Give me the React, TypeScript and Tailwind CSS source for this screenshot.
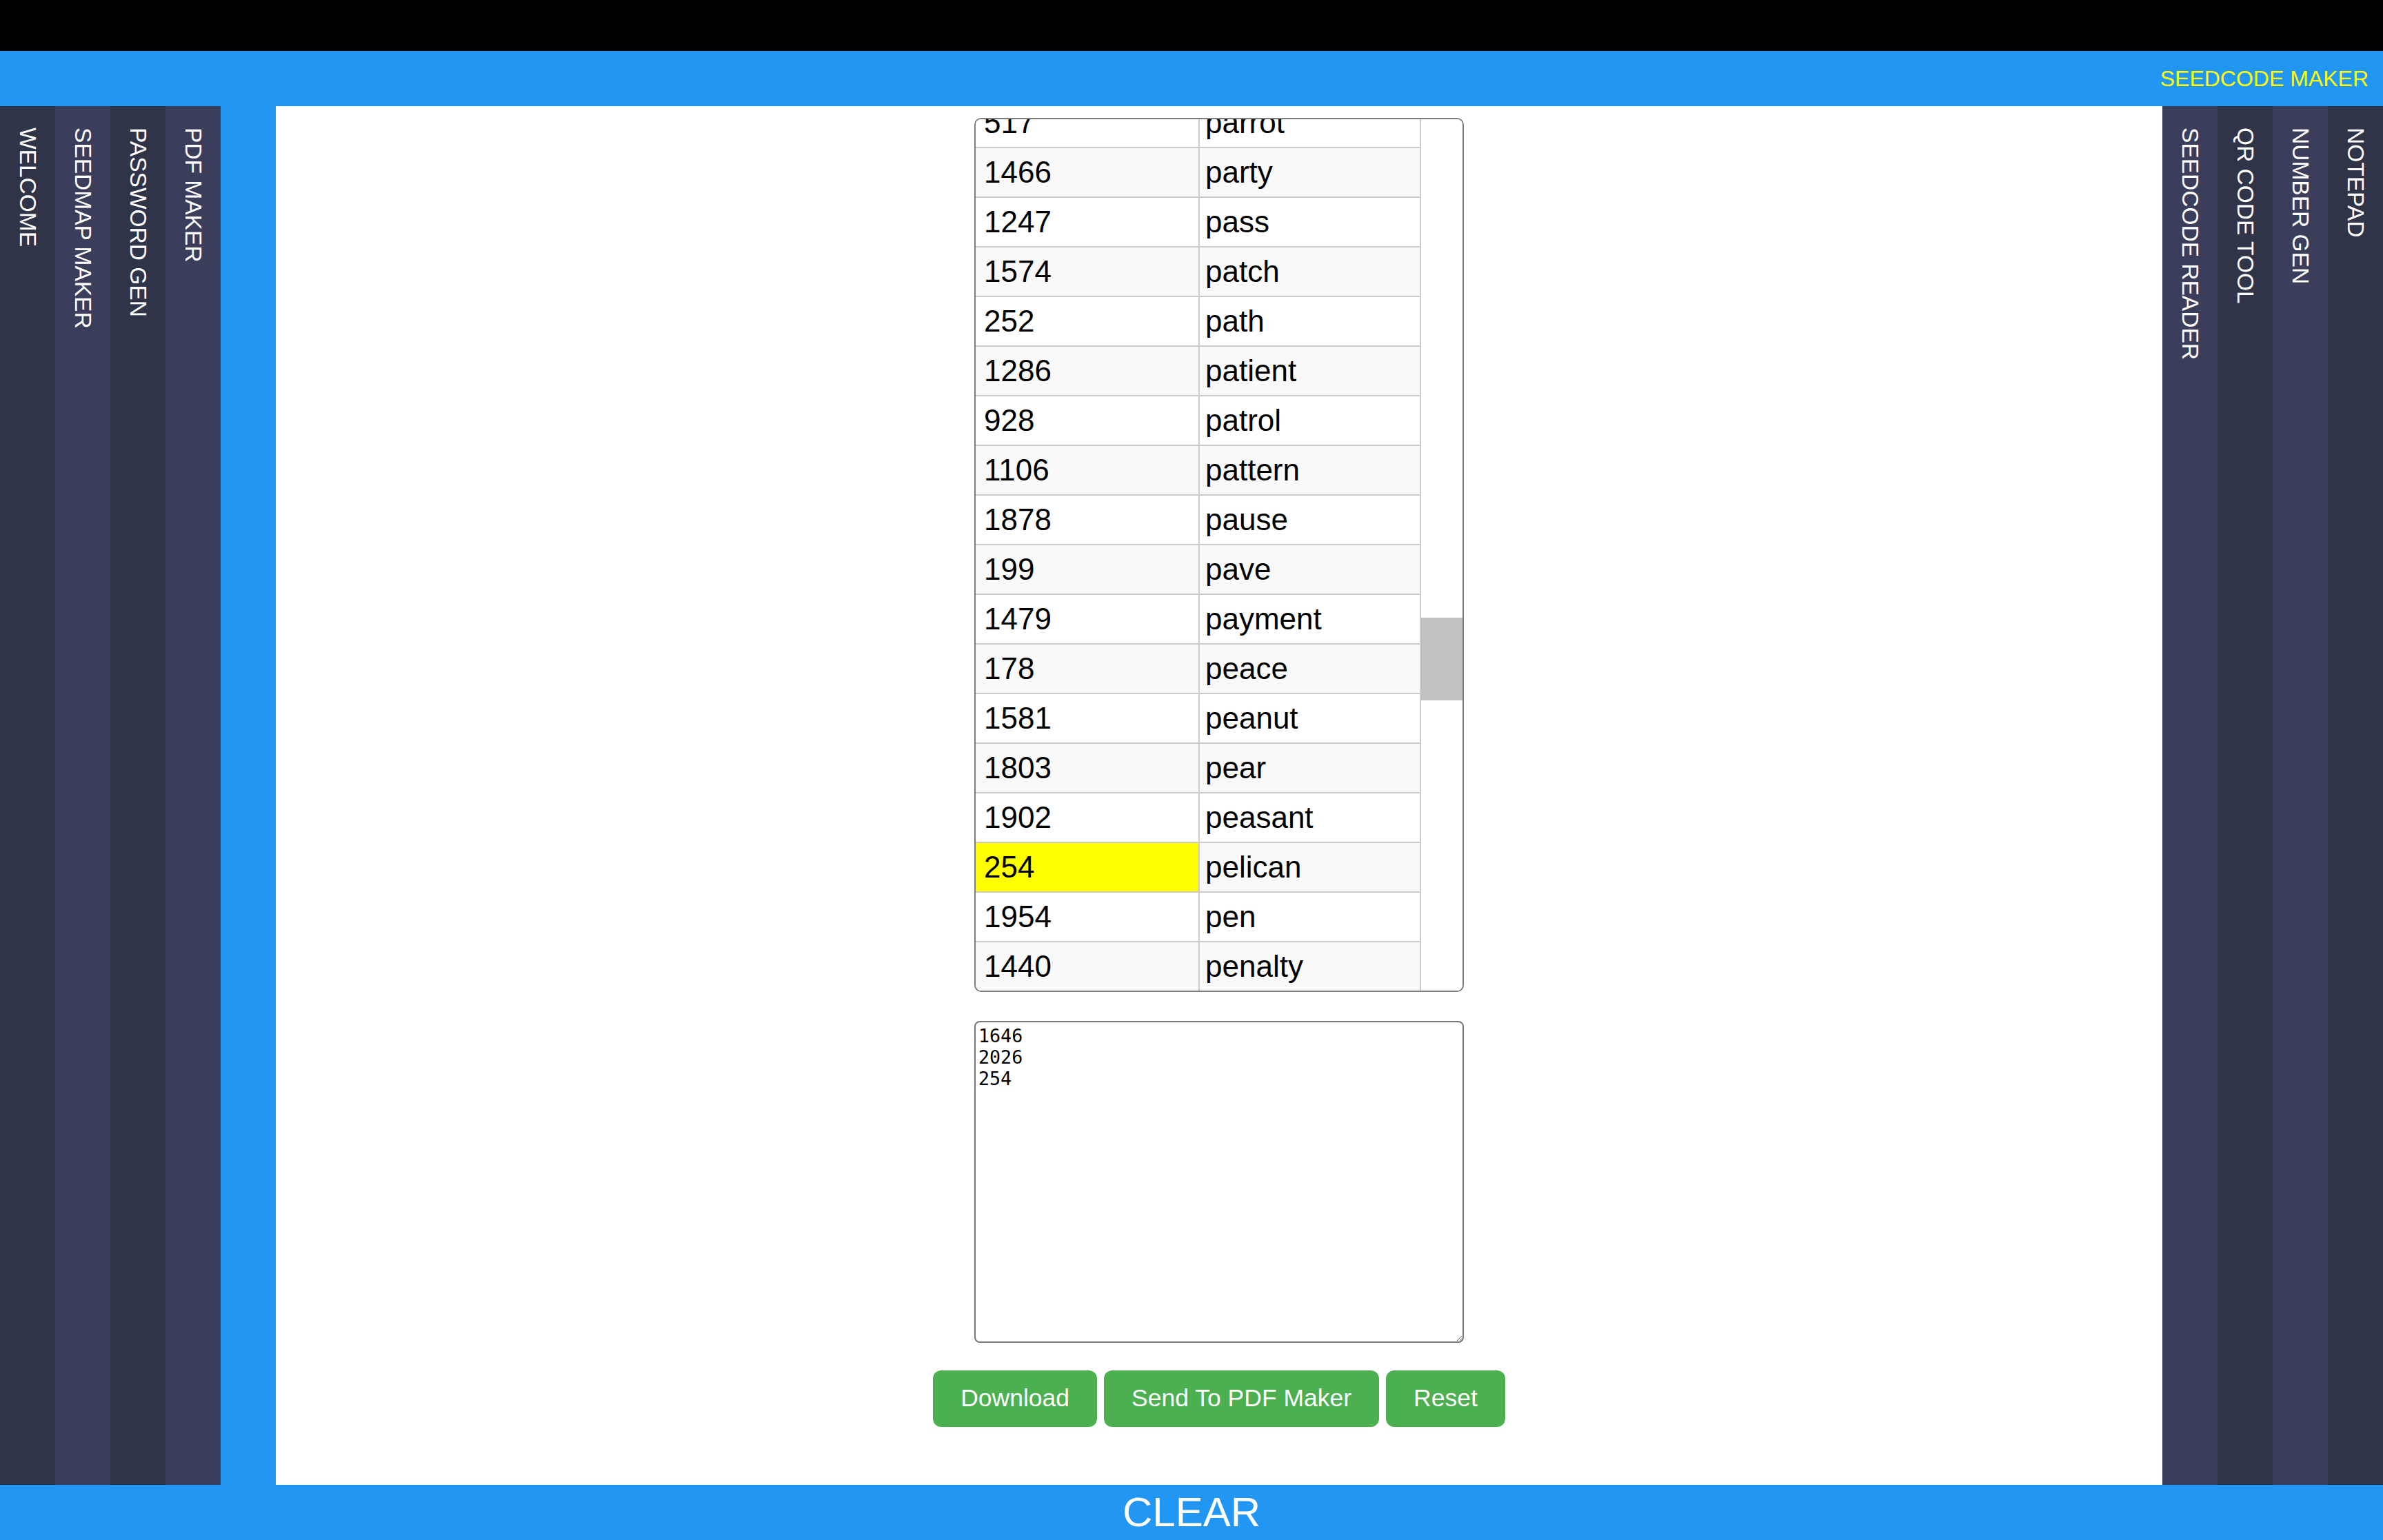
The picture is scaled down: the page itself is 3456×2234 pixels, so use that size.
import React from 'react';

type Row = { code: string; word: string; hit?: boolean };

const rows: Row[] = [
  { code: '517', word: 'parrot' },
  { code: '1466', word: 'party' },
  { code: '1247', word: 'pass' },
  { code: '1574', word: 'patch' },
  { code: '252', word: 'path' },
  { code: '1286', word: 'patient' },
  { code: '928', word: 'patrol' },
  { code: '1106', word: 'pattern' },
  { code: '1878', word: 'pause' },
  { code: '199', word: 'pave' },
  { code: '1479', word: 'payment' },
  { code: '178', word: 'peace' },
  { code: '1581', word: 'peanut' },
  { code: '1803', word: 'pear' },
  { code: '1902', word: 'peasant' },
  { code: '254', word: 'pelican', hit: true },
  { code: '1954', word: 'pen' },
  { code: '1440', word: 'penalty' },
];

const leftTabs = ['WELCOME', 'SEEDMAP MAKER', 'PASSWORD GEN', 'PDF MAKER'];
const rightTabs = ['SEEDCODE READER', 'QR CODE TOOL', 'NUMBER GEN', 'NOTEPAD'];

function SideTab({ label, light }: { label: string; light: boolean }) {
  return (
    <div className={`w-[80px] h-full flex justify-center pt-[31px] ${light ? 'bg-[#3b3e5b]' : 'bg-[#2f3449]'}`}>
      <span className="[writing-mode:vertical-rl] text-white text-[33.5px] whitespace-nowrap">{label}</span>
    </div>
  );
}

function WordTable() {
  return (
    <div className="w-[710px] h-[1268px] border-2 border-[#7c7c7c] rounded-[10px] overflow-hidden flex bg-white">
      {/* rows, scrolled a bit */}
      <div className="w-[646px] h-full overflow-hidden">
        <div className="-mt-[30px]">
          {rows.map((r, i) => (
            <div
              key={r.code}
              className={`flex h-[72px] border-b-2 border-[#cccccc] text-[44px] text-black ${i % 2 ? 'bg-[#f9f9f9]' : 'bg-white'}`}
            >
              <div className={`w-[325px] border-r-2 border-[#cccccc] flex items-center pl-[12px] ${r.hit ? 'bg-[#ffff00]' : ''}`}>
                {r.code}
              </div>
              <div className="flex-1 border-r-2 border-[#cccccc] flex items-center pl-[8px]">{r.word}</div>
            </div>
          ))}
        </div>
      </div>

      {/* scrollbar */}
      <div className="w-[60px] h-full bg-white">
        <div className="mt-[723px] h-[120px] bg-[#c1c1c1]" />
      </div>
    </div>
  );
}

export default function App() {
  return (
    <div className="w-[3456px] h-[2234px] flex flex-col bg-black font-['Liberation_Sans',Arial,sans-serif]">
      <div className="h-[74px] bg-black" />

      <header className="h-[80px] bg-[#2196f3] flex items-center justify-end pr-[21px]">
        <span className="text-[#ffff00] text-[32px]">SEEDCODE MAKER</span>
      </header>

      <div className="flex flex-1 bg-[#2196f3]">
        <nav className="flex h-full">
          {leftTabs.map((t, i) => (
            <SideTab key={t} label={t} light={i % 2 === 1} />
          ))}
        </nav>

        <div className="w-[80px]" />

        <main className="flex-1 bg-white flex flex-col items-center pt-[17px]">
          <WordTable />

          <textarea
            defaultValue={'1646\n2026\n254'}
            className="mt-[42px] w-[710px] h-[467px] border-2 border-[#767676] rounded-[8px] p-[4px] text-[26.67px] leading-[31px] text-black font-['DejaVu_Sans_Mono',monospace] resize"
          />

          <div className="mt-[40px] flex gap-[10px]">
            <button className="h-[82px] px-[40px] rounded-[12px] bg-[#4caf50] text-white text-[35.5px]">Download</button>
            <button className="h-[82px] px-[40px] rounded-[12px] bg-[#4caf50] text-white text-[35.5px]">Send To PDF Maker</button>
            <button className="h-[82px] px-[40px] rounded-[12px] bg-[#4caf50] text-white text-[35.5px]">Reset</button>
          </div>
        </main>

        <nav className="flex h-full">
          {rightTabs.map((t, i) => (
            <SideTab key={t} label={t} light={i % 2 === 0} />
          ))}
        </nav>
      </div>

      <footer className="h-[80px] bg-[#2196f3] flex items-center justify-center">
        <span className="text-white text-[60px] leading-none">CLEAR</span>
      </footer>
    </div>
  );
}
